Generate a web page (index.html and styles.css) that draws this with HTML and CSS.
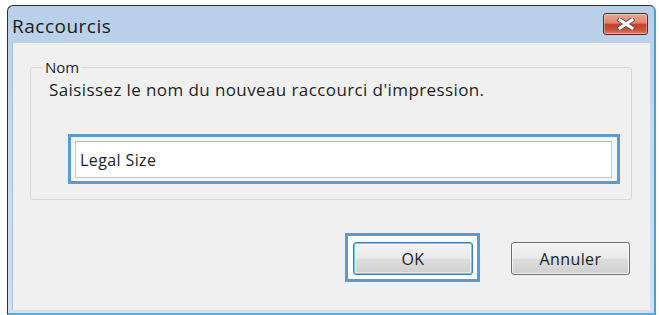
FILE: index.html
```html
<!DOCTYPE html>
<html lang="fr">
<head>
  <meta charset="UTF-8">
  <meta name="viewport" content="width=device-width, initial-scale=1.0">
  <title>Raccourcis</title>
  <link rel="stylesheet" href="styles.css">
</head>
<body>
  <div class="window">
    <div class="titlebar">
      <span class="title">Raccourcis</span>
      <button class="close" type="button" aria-label="Fermer">
        <svg width="18" height="12" viewBox="0 0 18 12">
          <path d="M3 2 L15 10 M15 2 L3 10" stroke="#5a5a5a" stroke-width="5" stroke-linecap="square"/>
          <path d="M3 2 L15 10 M15 2 L3 10" stroke="#ffffff" stroke-width="3" stroke-linecap="square"/>
        </svg>
      </button>
    </div>

    <div class="content">
      <fieldset class="group">
        <legend>Nom</legend>
        <p class="prompt">Saisissez le nom du nouveau raccourci d'impression.</p>
        <div class="field-focus">
          <input class="field" type="text" value="Legal Size">
        </div>
      </fieldset>

      <div class="actions">
        <div class="focus-ring">
          <button class="btn btn-default" type="button">OK</button>
        </div>
        <button class="btn" type="button">Annuler</button>
      </div>
    </div>
  </div>
</body>
</html>
```

FILE: styles.css
```css
:root {
  --color-page: #ffffff;
  --color-face: #f0f0f0;
  --color-text: #1e1e1e;
  --color-focus: #5b9bd1;
}

body {
  margin: 0;
  background-color: var(--color-page);
  font-family: "Open Sans", "Noto Sans", sans-serif;
  font-size: 16px;
  letter-spacing: 0.4px;
  color: var(--color-text);
}

.window {
  box-sizing: border-box;
  display: flex;
  flex-direction: column;
  width: 649px;
  height: 310px;
  margin: 5px 0 0 7px;
  padding: 0 4px 3px 4px;
  border: 1px solid #2e2e2e;
  border-right: 2px solid #4a9fd3;
  border-bottom: 2px solid #4fb1dc;
  border-radius: 6px 6px 0 0;
  background: linear-gradient(to bottom, #b7cfe9, #c4d9ee 40%, #cfe1f2);
}

.titlebar {
  display: flex;
  align-items: flex-start;
  justify-content: space-between;
  height: 37px;
  padding-right: 2px;
}

.title {
  margin-top: 10px;
  font-size: 19px;
  line-height: 20px;
  letter-spacing: 0.5px;
  color: #1b1b1b;
}

.close {
  display: flex;
  align-items: center;
  justify-content: center;
  width: 45px;
  height: 22px;
  margin-top: 7px;
  padding: 0;
  border: 1px solid #5d2a22;
  border-radius: 3px;
  background: linear-gradient(to bottom, #eaa594 0%, #dc8572 45%, #c4412a 52%, #c9523a 80%, #e0866a 100%);
  box-shadow: inset 0 0 0 1px rgba(255, 255, 255, 0.35);
}

.content {
  flex: 1;
  display: flex;
  flex-direction: column;
  background-color: var(--color-face);
  border-left: 1px solid #a9c0d8;
}

.group {
  box-sizing: border-box;
  width: 602px;
  height: 141px;
  margin: 16px 0 0 17px;
  padding: 0;
  min-width: 0;
  border: 1px solid #d5d9dd;
  border-radius: 3px;
}

.group legend {
  margin-left: 12px;
  padding: 0 2px;
  font-size: 15px;
  line-height: 16px;
  letter-spacing: 0;
}

.prompt {
  margin: 5px 0 0 18px;
  font-size: 17px;
  line-height: 20px;
}

.field-focus {
  box-sizing: border-box;
  width: 552px;
  height: 50px;
  margin: 34px 0 0 37px;
  padding: 4px 5px 3px 4px;
  border: 3px solid var(--color-focus);
  background-color: #f5f8fb;
}

.field {
  box-sizing: border-box;
  display: block;
  width: 100%;
  height: 37px;
  margin: 0;
  padding: 0 4px;
  border: 1px solid #b4cde3;
  border-top-color: #9fbdd8;
  background-color: #ffffff;
  font-family: inherit;
  font-size: 16px;
  letter-spacing: 0.4px;
  color: var(--color-text);
  outline: none;
}

.actions {
  display: flex;
  align-items: flex-start;
  justify-content: flex-end;
  gap: 31px;
  margin-top: 33px;
  padding-right: 20px;
}

.focus-ring {
  padding: 6px 4px 4px 5px;
  border: 3px solid var(--color-focus);
  background-color: #ffffff;
}

.btn {
  box-sizing: border-box;
  width: 120px;
  height: 33px;
  padding: 0;
  border: 1px solid #707070;
  border-radius: 3px;
  background: linear-gradient(to bottom, #f2f2f2 0%, #ebebeb 48%, #dddddd 52%, #cfcfcf 100%);
  box-shadow: inset 0 0 0 1px rgba(255, 255, 255, 0.7);
  font-family: inherit;
  font-size: 16px;
  letter-spacing: 0.4px;
  color: var(--color-text);
}

.actions > .btn {
  width: 119px;
  margin-top: 9px;
}

.btn-default {
  border-color: #3c7fb1;
  box-shadow: inset 0 0 0 1px #6ccbf0, inset 0 0 0 2px rgba(255, 255, 255, 0.5);
}
```
